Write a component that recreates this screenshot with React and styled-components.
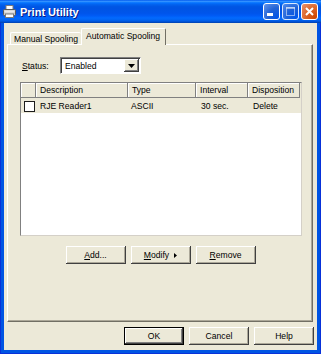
import styled, { createGlobalStyle } from "styled-components";

const GlobalStyle = createGlobalStyle`
  * { box-sizing: border-box; }
  html, body { margin: 0; padding: 0; background: #ffffff; }
  body { font-family: "Liberation Sans", Arial, sans-serif; font-size: 8.6px; color: #000; }
`;

const Window = styled.div`
  width: 321px;
  height: 354px;
  display: flex;
  flex-direction: column;
  background: #0054e3;
  border: 1px solid #0831d9;
  border-top: none;
`;

const TitleBar = styled.div`
  height: 23px;
  flex: none;
  display: flex;
  align-items: center;
  padding: 0 3px 0 3px;
  margin: 0 -1px;
  background: linear-gradient(
    180deg,
    #0058ee 0%,
    #3593ff 6%,
    #127dff 10%,
    #036ffc 14%,
    #0262ee 20%,
    #0057e5 28%,
    #0054e3 36%,
    #0055eb 58%,
    #005bf5 68%,
    #026afe 78%,
    #0062ef 88%,
    #0052d6 94%,
    #0040ab 100%
  );
`;

const Title = styled.span`
  flex: 1;
  margin-left: 4px;
  color: #fff;
  font-weight: bold;
  font-size: 11px;
  text-shadow: 1px 1px 0 #0a1883;
`;

const CaptionButtons = styled.div`
  display: flex;
  gap: 2px;
`;

const CaptionButton = styled.div`
  width: 17px;
  height: 17px;
  border: 1px solid #fff;
  border-radius: 3px;
  display: flex;
  align-items: center;
  justify-content: center;
  background: ${(p) =>
    p.$close
      ? "radial-gradient(circle at 90% 90%, #cc4600 0%, #dc6527 50%, #e69372 100%)"
      : "radial-gradient(circle at 90% 90%, #0054e9 0%, #2263d5 50%, #6696eb 100%)"};
  opacity: ${(p) => (p.$dim ? 0.85 : 1)};
`;

const Body = styled.div`
  flex: 1;
  display: flex;
  flex-direction: column;
  background: #ece9d8;
  padding: 5px 3px 5px 3px;
  margin: 0 3px 3px;
`;

const TabStrip = styled.div`
  height: 16px;
  display: flex;
  align-items: flex-end;
  padding-left: 3px;
  position: relative;
  z-index: 1;
`;

const Tab = styled.div`
  height: ${(p) => (p.$active ? "17px" : "12px")};
  margin-bottom: ${(p) => (p.$active ? "-1px" : "0")};
  padding: ${(p) => (p.$active ? "2px 5px 0 4px" : "0 3px")};
  display: flex;
  align-items: ${(p) => (p.$active ? "flex-start" : "center")};
  background: #ece9d8;
  border: 1px solid;
  border-color: #fff #716f64 transparent #fff;
  border-bottom: none;
  border-radius: 2px 2px 0 0;
  ${(p) => (p.$active ? "" : "border-right: none;")}
  white-space: nowrap;
`;

const Panel = styled.div`
  height: 278px;
  flex: none;
  margin-right: 1px;
  display: flex;
  flex-direction: column;
  padding: 12px 11px 0 12px;
  border: 1px solid;
  border-color: #fff #716f64 #716f64 #fff;
  box-shadow: inset -1px -1px 0 #aca899;
`;

const StatusRow = styled.div`
  display: flex;
  align-items: center;
  height: 17px;
`;

const Label = styled.span`
  width: 40px;
  padding-left: 2px;
`;

const Combo = styled.div`
  width: 81px;
  height: 17px;
  display: flex;
  background: #fff;
  border: 1px solid;
  border-color: #808080 #fff #fff #808080;
  box-shadow: inset 1px 1px 0 #404040;
`;

const ComboText = styled.span`
  flex: 1;
  display: flex;
  align-items: center;
  padding: 1px 0 0 4px;
`;

const ComboButton = styled.div`
  width: 15px;
  margin: 1px 1px 1px 0;
  display: flex;
  align-items: center;
  justify-content: center;
  background: #ece9d8;
  box-shadow: inset -1px -1px 0 #404040, inset 1px 1px 0 #fff, inset -2px -2px 0 #808080;
`;

const ListView = styled.div`
  margin-top: 8px;
  height: 154px;
  width: 282px;
  background: #fff;
  border: 1px solid;
  border-color: #808080 #d4d0c8 #d4d0c8 #808080;
`;

const Row = styled.div`
  display: grid;
  grid-template-columns: 15px 92px 68px 52px 52px;
  height: 15px;
  background: #ece9d8;
`;

const HeadCell = styled.div`
  display: flex;
  align-items: center;
  padding-left: ${(p) => p.$pad ?? 4}px;
  border-right: 1px solid #808080;
  border-bottom: 1px solid #808080;
  box-shadow: inset 1px 1px 0 #fff;
  white-space: nowrap;
`;

const Cell = styled.div`
  display: flex;
  align-items: center;
  padding-left: ${(p) => p.$pad ?? 4}px;
  white-space: nowrap;
`;

const Check = styled.div`
  width: 11px;
  height: 11px;
  margin: 1px 0 0 3px;
  flex: none;
  background: #fff;
  border: 1px solid #1c1c1c;
`;

const ButtonRow = styled.div`
  margin-top: 10px;
  display: flex;
  justify-content: center;
  gap: 5px;
`;

const Button = styled.div`
  width: 60px;
  height: 18px;
  display: flex;
  align-items: center;
  justify-content: center;
  gap: 5px;
  background: #ece9d8;
  box-shadow: ${(p) =>
    p.$default
      ? "inset 0 0 0 1px #000, inset -2px -2px 0 #404040, inset 2px 2px 0 #fff, inset -3px -3px 0 #808080"
      : "inset -1px -1px 0 #404040, inset 1px 1px 0 #fff, inset -2px -2px 0 #aca899"};
`;

const Footer = styled.div`
  margin-top: 5px;
  display: flex;
  justify-content: flex-end;
  gap: 5px;
`;

const U = styled.span`
  text-decoration: underline;
`;

const PrinterIcon = () => (
  <svg width="13" height="13" viewBox="0 0 13 13">
    <rect x="3" y="0.5" width="7" height="4" fill="#fff" stroke="#7a7a7a" />
    <rect x="0.5" y="4.5" width="12" height="6" rx="1" fill="#c8c8c8" stroke="#5a5a5a" />
    <rect x="1.5" y="5.5" width="10" height="2" fill="#e8e8e8" />
    <rect x="2.5" y="9" width="8" height="3.5" fill="#fff" stroke="#7a7a7a" />
  </svg>
);

const MinIcon = () => (
  <svg width="15" height="15" viewBox="0 0 15 15">
    <rect x="3" y="9" width="6" height="3" fill="#fff" />
  </svg>
);

const MaxIcon = () => (
  <svg width="15" height="15" viewBox="0 0 15 15">
    <rect x="3.5" y="3.5" width="8" height="8" fill="none" stroke="#fff" strokeOpacity="0.6" />
    <rect x="3" y="3" width="9" height="2" fill="#fff" fillOpacity="0.6" />
  </svg>
);

const CloseIcon = () => (
  <svg width="15" height="15" viewBox="0 0 15 15">
    <path d="M4 4 L11 11 M11 4 L4 11" stroke="#fff" strokeWidth="2" />
  </svg>
);

const DownArrow = () => (
  <svg width="7" height="4" viewBox="0 0 7 4">
    <path d="M0 0 H7 L3.5 4 Z" fill="#000" />
  </svg>
);

const RightArrow = () => (
  <svg width="3" height="5" viewBox="0 0 3 5">
    <path d="M0 0 L3 2.5 L0 5 Z" fill="#000" />
  </svg>
);

export default function App() {
  return (
    <>
      <GlobalStyle />
      <Window>
        <TitleBar>
          <PrinterIcon />
          <Title>Print Utility</Title>
          <CaptionButtons>
            <CaptionButton>
              <MinIcon />
            </CaptionButton>
            <CaptionButton $dim>
              <MaxIcon />
            </CaptionButton>
            <CaptionButton $close>
              <CloseIcon />
            </CaptionButton>
          </CaptionButtons>
        </TitleBar>
        <Body>
          <TabStrip>
            <Tab>Manual Spooling</Tab>
            <Tab $active>Automatic Spooling</Tab>
          </TabStrip>
          <Panel>
            <StatusRow>
              <Label>
                <U>S</U>tatus:
              </Label>
              <Combo>
                <ComboText>Enabled</ComboText>
                <ComboButton>
                  <DownArrow />
                </ComboButton>
              </Combo>
            </StatusRow>
            <ListView>
              <Row>
                <HeadCell />
                <HeadCell>Description</HeadCell>
                <HeadCell>Type</HeadCell>
                <HeadCell>Interval</HeadCell>
                <HeadCell>Disposition</HeadCell>
              </Row>
              <Row>
                <Cell $pad={0}>
                  <Check />
                </Cell>
                <Cell>RJE Reader1</Cell>
                <Cell $pad={3}>ASCII</Cell>
                <Cell $pad={5}>30 sec.</Cell>
                <Cell $pad={5}>Delete</Cell>
              </Row>
            </ListView>
            <ButtonRow>
              <Button>
                <span>
                  <U>A</U>dd...
                </span>
              </Button>
              <Button>
                <span>
                  <U>M</U>odify
                </span>
                <RightArrow />
              </Button>
              <Button>
                <span>
                  <U>R</U>emove
                </span>
              </Button>
            </ButtonRow>
          </Panel>
          <Footer>
            <Button $default>OK</Button>
            <Button>Cancel</Button>
            <Button>Help</Button>
          </Footer>
        </Body>
      </Window>
    </>
  );
}
